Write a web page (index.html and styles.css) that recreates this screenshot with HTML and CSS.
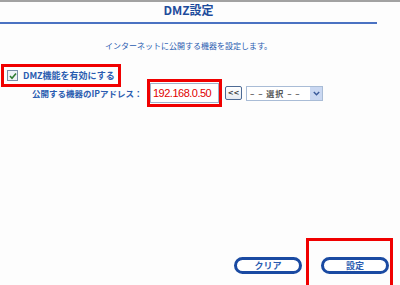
FILE: index.html
```html
<!DOCTYPE html>
<html lang="ja">
<head>
  <meta charset="UTF-8" />
  <title>DMZ設定</title>
  <link rel="stylesheet" href="styles.css">
</head>
<body>
  <div class="page">
    <div class="topline"></div>
    <div class="header">
      <h1 class="title">DMZ設定</h1>
    </div>
    <p class="intro">インターネットに公開する機器を設定します。</p>

    <div class="settings">
      <label class="mark enable">
        <span class="check">
          <svg width="8" height="8" viewBox="0 0 8 8"><path d="M1 4 L3 6.2 L7 1.5" fill="none" stroke="#2f7d32" stroke-width="1.6"/></svg>
        </span>
        DMZ機能を有効にする
      </label>
      <div class="ip-row">
        <span class="ip-label">公開する機器のIPアドレス：</span>
        <span class="mark ip-mark"><input type="text" class="ip-input" value="192.168.0.50"></span>
        <button class="copy-btn">&lt;&lt;</button>
        <span class="select">
          <span class="select-text">– – 選択 – –</span>
          <span class="select-arrow">
            <svg width="7" height="5" viewBox="0 0 7 5"><path d="M0.8 1 L3.5 3.8 L6.2 1" fill="none" stroke="#3a5a9a" stroke-width="1.4"/></svg>
          </span>
        </span>
      </div>
    </div>

    <div class="actions">
      <button class="pill clear-btn">クリア</button>
      <div class="mark submit-mark">
        <button class="pill">設定</button>
      </div>
    </div>
  </div>
</body>
</html>
```

FILE: styles.css
```css
body {
  margin: 0;
  background-color: #fdfdfd;
  font-family: "Noto Sans CJK JP", "DejaVu Sans", sans-serif;
}

.page {
  width: 400px;
  height: 285px;
  overflow: hidden;
  display: flex;
  flex-direction: column;
}

.topline {
  height: 2px;
  background-color: #a2a2a2;
}

.header {
  width: 377px;
  border-bottom: 2px solid #4a72c2;
}

.title {
  margin: 0;
  height: 20px;
  line-height: 16px;
  text-align: center;
  font-size: 12px;
  font-weight: bold;
  color: #1d4c9c;
}

.intro {
  width: 377px;
  margin: 16px 0 0;
  line-height: 12px;
  text-align: center;
  font-size: 8px;
  color: #2a5cb0;
}

.settings {
  margin-top: 12px;
}

.mark {
  border: 3px solid #f00000;
  box-sizing: border-box;
}

.enable {
  margin-left: 1px;
  width: 120px;
  height: 23px;
  padding-left: 3px;
  display: flex;
  align-items: center;
  gap: 5px;
  font-size: 9px;
  font-weight: bold;
  color: #2a5cb0;
}

.check {
  width: 9px;
  height: 9px;
  border: 1px solid #7a8fa8;
  background-color: #eef2f6;
  display: flex;
  align-items: center;
  justify-content: center;
}

.ip-row {
  margin-top: -8px;
  height: 28px;
  display: flex;
  align-items: center;
}

.ip-label {
  margin-left: 32px;
  width: 115px;
  font-size: 8.5px;
  font-weight: bold;
  color: #2a5cb0;
  white-space: nowrap;
}

.ip-mark {
  width: 75px;
  height: 28px;
  padding: 1px 0;
  display: flex;
}

.ip-input {
  width: 69px;
  height: 20px;
  margin: 0;
  padding: 0 2px;
  box-sizing: border-box;
  border: 1px solid #9fb2cc;
  background-color: #fff;
  font-family: "Liberation Sans", Arial, sans-serif;
  font-size: 11px;
  letter-spacing: -0.5px;
  color: #e00000;
}

.copy-btn {
  margin-left: 3px;
  width: 17px;
  height: 14px;
  padding: 0;
  border: 1px solid #4d6a94;
  border-radius: 2px;
  background: linear-gradient(#ffffff, #e6eaf0);
  font-family: "DejaVu Sans", sans-serif;
  font-size: 7px;
  font-weight: bold;
  color: #333;
  line-height: 12px;
}

.select {
  margin-left: 4px;
  width: 77px;
  height: 15px;
  box-sizing: border-box;
  border: 1px solid #a9bcd6;
  background-color: #fff;
  display: flex;
  align-items: center;
}

.select-text {
  flex: 1;
  padding-left: 3px;
  font-size: 8px;
  font-weight: bold;
  letter-spacing: 1px;
  color: #555;
  white-space: nowrap;
}

.select-arrow {
  width: 12px;
  height: 13px;
  background-color: #cad8f2;
  display: flex;
  align-items: center;
  justify-content: center;
}

.actions {
  margin-top: auto;
  height: 47px;
  padding-right: 7px;
  display: flex;
  justify-content: flex-end;
  align-items: flex-start;
}

.pill {
  width: 68px;
  height: 17px;
  padding: 0;
  box-sizing: border-box;
  border: 3px solid #1a4aa2;
  border-radius: 9px;
  background-color: #fff;
  font-family: "Noto Sans CJK JP", sans-serif;
  font-size: 9px;
  font-weight: bold;
  line-height: 10px;
  color: #2a5cb0;
}

.clear-btn {
  margin-top: 19px;
  margin-right: 4px;
}

.submit-mark {
  width: 87px;
  height: 50px;
  border-bottom: none;
  padding: 16px 0 0 12px;
  display: flex;
  align-items: flex-start;
}
```
